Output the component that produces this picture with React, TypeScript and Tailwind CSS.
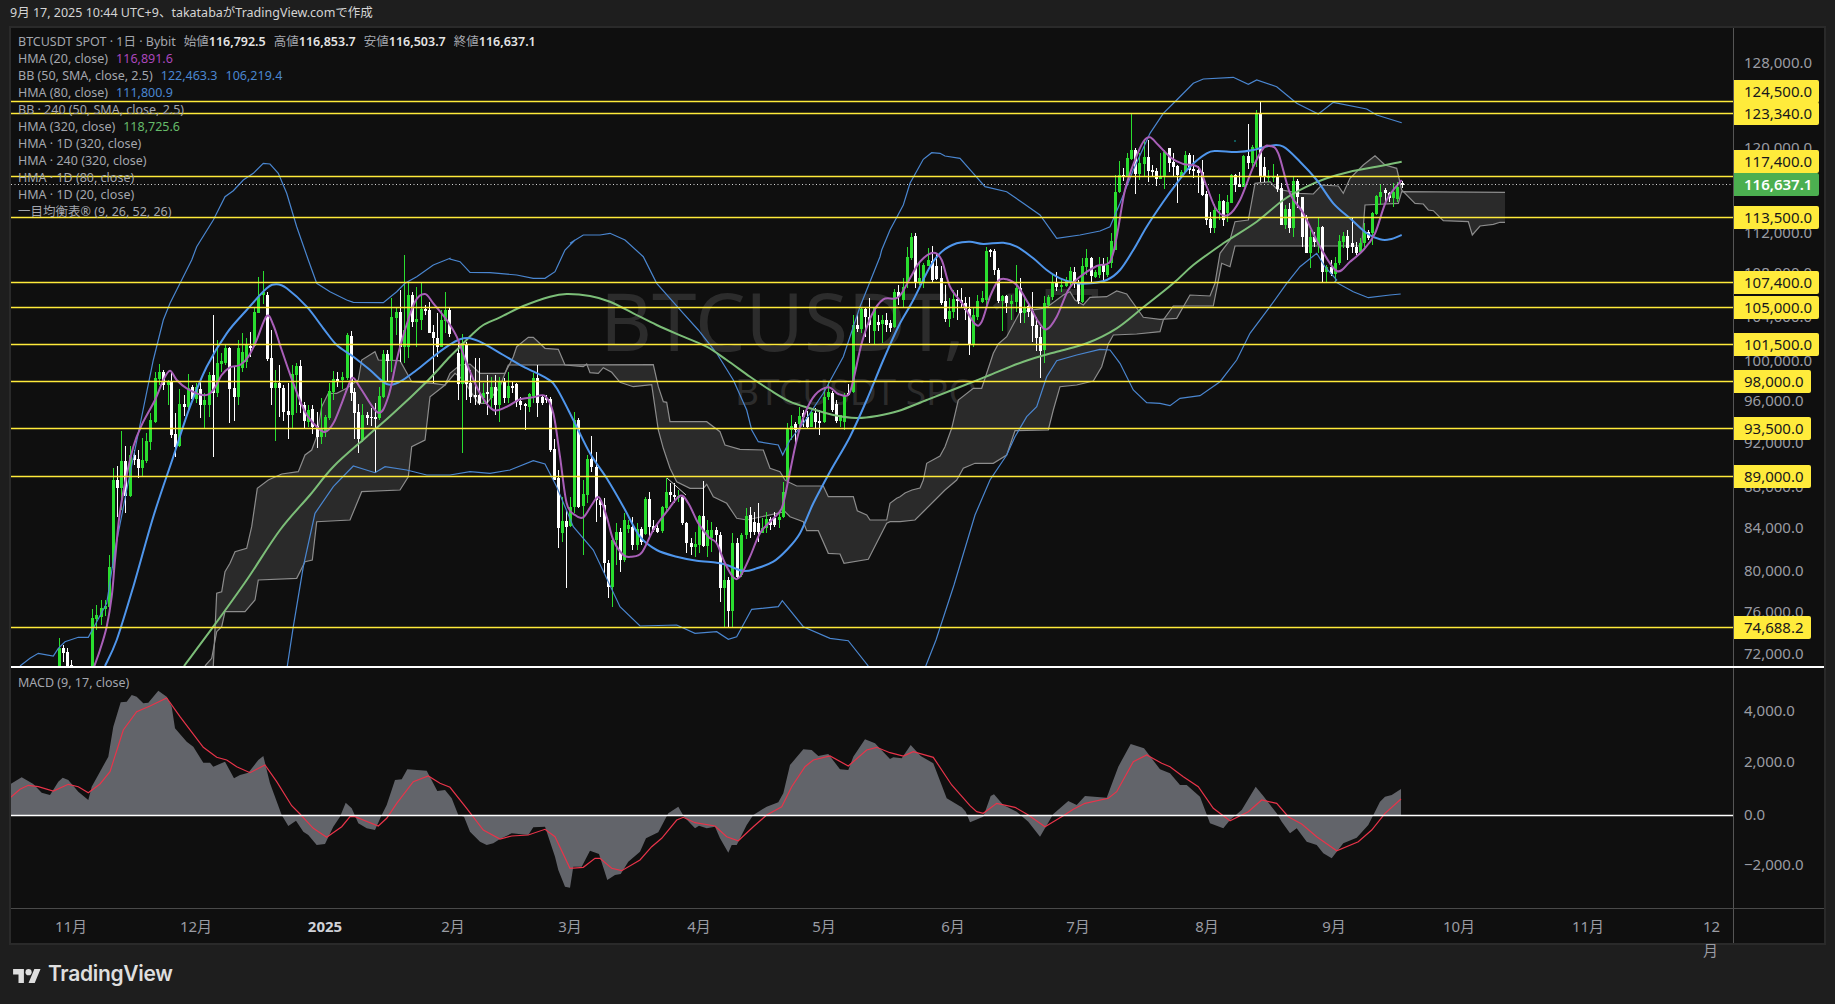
const sans = "font-['Noto_Sans','Noto_Sans_CJK_JP',sans-serif]";

// coordinates below were read off 3x crops, so each block keeps its crop origin
type Pt = [number, number];

function at(ox: number, oy: number, raw: string): Pt[] {
  return raw
    .trim()
    .split(/\s+/)
    .map((p) => {
      const [x, y] = p.split(",").map(Number);
      return [ox + x / 3, oy + y / 3] as Pt;
    });
}

const poly = (pts: Pt[]) => pts.map(([x, y]) => `${x.toFixed(1)},${y.toFixed(1)}`).join(" ");

function smooth(pts: Pt[]) {
  let d = `M${pts[0][0].toFixed(1)} ${pts[0][1].toFixed(1)}`;
  for (let i = 0; i < pts.length - 1; i++) {
    const p0 = pts[Math.max(i - 1, 0)];
    const p1 = pts[i];
    const p2 = pts[i + 1];
    const p3 = pts[Math.min(i + 2, pts.length - 1)];
    const c1 = [p1[0] + (p2[0] - p0[0]) / 6, p1[1] + (p2[1] - p0[1]) / 6];
    const c2 = [p2[0] - (p3[0] - p1[0]) / 6, p2[1] - (p3[1] - p1[1]) / 6];
    d += `C${c1[0].toFixed(1)} ${c1[1].toFixed(1)} ${c2[0].toFixed(1)} ${c2[1].toFixed(1)} ${p2[0].toFixed(1)} ${p2[1].toFixed(1)}`;
  }
  return d;
}

const hma20 = [
  ...at(0, 250, "283,1248 300,1200 320,1130 335,1040 345,930 358,800 375,700 400,590 425,525 465,450 490,390 510,362 530,390 560,415 612,436 640,420 665,375 690,352 720,345 745,320 770,270 800,198 820,225 845,300 880,400 915,485 950,530 975,546 1000,520 1025,460 1050,395 1062,385 1085,420 1135,488 1165,440 1190,330 1215,240 1245,155 1275,132 1300,160 1340,210"),
  ...at(450, 240, "20,290 50,370 90,460 130,510 170,500 210,478 250,472 285,468 310,520 330,650 350,790 375,825 400,832 425,795 447,772 470,830 490,900 520,945 545,950 575,938 610,870 650,815 690,767 715,790 745,850 775,890 800,910 825,970 850,1012 870,1010 900,950 930,880 965,840 995,805 1015,720 1040,600 1065,520 1095,465 1135,442 1165,462 1195,465 1210,420 1235,310 1265,225 1300,178 1345,172"),
  ...at(900, 220, "30,175 60,125 100,98 125,120 150,200 190,255 225,312 245,305 270,230 295,182 320,178 350,195 385,250 415,305 440,328 470,290 505,210 540,170 590,138"),
  ...at(1100, 90, "30,515 50,440 75,300 105,210 130,155 150,142 175,165 215,205 250,222 295,232 320,290 350,360 385,375 420,330 460,230 490,175 510,168 535,190 570,310 610,370 660,470 710,543 750,515 790,480 825,430 860,330 905,270"),
];

const hma80 = [
  ...at(0, 250, "315,1248 350,1170 400,1010 460,800 520,620 570,470 620,350 680,250 740,180 800,115 830,103 860,115 920,170 970,235 1010,285 1060,320 1110,360 1160,402 1200,395 1250,360 1300,320 1345,287"),
  ...at(450, 240, "30,298 60,295 100,310 160,345 220,380 290,415 320,445 370,540 420,640 470,715 520,800 570,890 620,930 680,950 740,962 800,968 830,975 880,993 920,985 970,965 1010,930 1050,880 1090,790 1140,695 1200,590 1250,480 1300,360 1345,260"),
  ...at(900, 220, "40,240 90,140 125,95 170,70 210,65 250,72 310,68 350,80 400,115 440,150 480,175 530,190 570,190 620,180 660,150"),
  ...at(840, 70, "880,540 920,470 970,395 1010,340 1050,290"),
  ...at(1100, 90, "320,190 350,183 410,186 460,180 510,167 550,170 600,215 650,270 700,340 750,385 800,430 840,448 870,448 905,435"),
];

const hma320 = [
  ...at(0, 250, "552,1248 640,1130 740,990 840,840 930,735 1000,650 1100,560 1180,490 1280,395 1345,325"),
  ...at(450, 240, "30,320 70,280 100,255 150,232 220,198 300,170 350,162 420,168 480,185 550,220 620,255 700,290 770,320 830,360 900,410 960,450 1020,485 1080,505 1150,525 1220,534 1280,528 1345,513"),
  ...at(900, 220, "80,540 170,505 270,465 370,425 470,395 560,370 650,325 730,262 820,190"),
  ...at(1100, 90, "280,525 370,460 470,395 550,330 620,290 680,265 750,245 820,232 905,215"),
];

const bbUpper = [
  ...at(0, 250, "60,1248 90,1225 115,1210 160,1218 175,1195 195,1175 235,1162 265,1162 285,1125 320,1060 345,900 380,720 420,525 460,330 490,210 510,160 550,80 575,30"),
  ...at(100, 130, "275,390 290,350 340,270 375,200 400,182 430,150 460,130 490,100 510,102 535,130 560,190 590,290 625,390"),
  ...at(0, 250, "950,100 990,125 1040,150 1060,157 1150,158 1190,125 1215,100 1250,80 1300,45 1350,25"),
  ...at(450, 240, "0,57 30,65 60,97 120,98 200,105 250,115 285,115 315,95 345,30 375,0"),
  ...at(100, 130, "1410,340 1450,315 1500,315"),
  ...at(450, 240, "480,-20 525,0 580,50 620,130 700,220 745,270 800,340 850,420 890,510 905,570 925,605 985,615 998,645 1020,600 1060,550 1120,460 1180,350 1230,200 1290,50"),
  ...at(840, 70, "125,540 150,480 190,405 210,340 250,268 275,248 300,250 315,258 360,265 400,310 435,350 500,365 550,400 600,435 650,505 720,495 780,483 810,470 840,400 880,300 930,190 970,130 1010,90 1060,40 1090,27 1180,22 1225,43 1250,30 1310,50 1340,75"),
  ...at(1100, 90, "590,40 655,72 700,37 800,57 830,75 905,98"),
];

const bbLower = [
  ...at(0, 250, "862,1248 880,1130 910,950 945,790 1000,710 1060,648 1125,668 1155,650 1220,660 1280,675 1345,675"),
  ...at(450, 240, "0,705 60,695 120,700 180,690 250,662 285,672 320,740 370,860 430,930 510,1100 570,1158 680,1155 735,1180 800,1175 835,1198 860,1190 905,1108 985,1100 997,1082 1060,1160 1140,1195 1195,1202 1255,1278"),
];

const bbLower2 = [
  [925, 668] as Pt,
  [936, 640] as Pt,
  [954, 585] as Pt,
  [975, 515] as Pt,
  ...at(900, 220, "270,780 320,705 345,650 380,590 410,560 440,470 470,422 530,405 600,388 630,390 660,430 700,510 740,548 780,550 810,557 840,535 900,527 960,485 1010,420 1050,340 1110,260 1160,190 1200,140 1250,100 1275,140 1310,180"),
  ...at(1100, 90, "705,575 760,605 805,623 870,615 902,612"),
];

const spanA = [
  ...at(0, 250, "640,1248 650,1030 665,1025 675,965 690,940 705,905 740,895 755,830 772,715 805,690 845,672 895,665 915,615 935,600 950,560 965,470 985,430 1010,430 1040,415 1075,390 1085,330 1125,305 1135,330 1200,332 1235,395 1300,400 1335,405"),
  ...at(450, 240, "15,400 40,420 85,490 110,490 150,440 165,400 190,350 200,320 235,292 250,292 285,325 325,328 345,375 400,380 410,372 420,398 445,400 460,383 485,397 510,427 550,440 605,434 625,570 640,625 660,685 680,725 720,745 760,745 770,733 790,770 830,790 860,835 890,840 1005,815 1020,830 1060,845 1070,872 1105,872 1135,940 1170,942 1182,970 1255,958 1310,850 1320,845 1350,845"),
  [915, 520] as Pt,
  [925, 510] as Pt,
  [935, 500] as Pt,
  [945, 490] as Pt,
  ...at(900, 220, "170,780 190,745 225,730 280,730 320,705 345,632 445,630 460,570 480,500 530,495 580,483 605,440 625,372 640,345 710,342 780,335 790,300 820,258 940,258 965,130 990,140 1005,78"),
  ...at(1100, 90, "785,468 795,345 895,340 905,305 1215,307"),
];

const spanB = [
  ...at(0, 250, "615,1248 635,1225 650,1145 665,1130 675,1085 735,1085 765,1050 775,990 890,985 915,935 937,930 950,815 1050,810 1085,725 1200,720 1225,680 1235,590 1275,570 1290,440 1335,405 1350,370"),
  ...at(450, 240, "30,375 60,372 90,400 165,400 175,375 610,374 625,440 640,485 650,487 660,545 770,545 810,575 825,615 870,628 940,630 960,685 990,695 1005,720 1020,728 1040,738 1120,738 1135,770 1210,770 1222,812 1250,825 1260,840 1310,840 1320,790 1340,775 1350,770"),
  [905, 493] as Pt,
  [912, 490] as Pt,
  [920, 488] as Pt,
  ...at(900, 220, "70,780 80,730 120,708 135,680 155,625 175,540 220,505 245,505 280,400 295,372 320,350 360,275 430,265 450,255 490,225 510,215 525,240 550,255 570,232 620,230 650,213 680,222 730,292 780,298 830,295 850,260 870,225 930,228 945,190 960,100 990,60 1005,5"),
  ...at(1100, 90, "445,390 465,280 510,275 530,297 600,310 640,312 665,285 715,288 730,310 750,265 790,225 825,197 855,225 890,235 905,300 945,340 970,342 985,360 1000,362 1030,392 1105,395 1117,435 1140,408 1180,403 1200,397 1215,397"),
];

const cloud = [...spanA, ...[...spanB].reverse()];

// x, colour, body top, body bottom, wick top, wick bottom
const candleBlocks: [number, number, string][] = [
  [0, 250, `178 g 1195 1248 1165 1248,190 w 1195 1210 1185 1235,202 w 1207 1248 1195 1248,214 w 1245 1248 1230 1248,277 g 1105 1248 1078 1248,289 g 1095 1107 1065 1140,304 g 1075 1100 1050 1125,316 g 1068 1076 1050 1098,328 g 950 1070 915 1080,340 g 690 955 655 960,352 w 690 715 648 800,364 g 633 715 543 780,376 w 633 738 588 790,391 g 615 737 587 740,403 w 615 630 600 645,415 w 628 655 600 685,427 g 630 655 565 680,439 g 573 633 550 640,451 g 510 575 490 600,466 g 385 515 365 520,478 g 365 388 342 405,490 w 365 405 360 420,503 g 395 405 390 465,514 w 392 555 370 565,526 w 552 590 490 620,538 g 462 588 417 590,553 w 462 472 435 498,565 g 415 470 373 480,577 w 411 447 405 455,589 g 412 448 400 460,601 w 418 465 387 505,613 g 450 465 430 535,628 g 375 465 365 500,640 w 375 430 195 620,652 g 340 430 270 440,664 g 333 342 310 365,676 g 293 338 285 345,688 w 293 417 290 518,703 w 413 440 350 512,715 g 293 440 270 465,727 g 305 355 250 365,739 g 285 335 265 353,751 w 288 290 245 320,763 g 185 288 170 290,775 g 140 190 82 190,790 g 125 135 63 162,802 w 135 328 125 332,814 w 323 413 240 465,826 g 400 415 360 572,838 w 398 415 345 500,850 w 413 485 405 512,865 w 483 495 400 567,877 g 373 495 345 535,889 g 348 375 340 490,901 w 348 465 330 490,913 w 465 513 455 535,925 g 480 515 465 532,937 w 477 530 465 552,952 w 528 560 485 595,964 g 538 560 445 582,976 g 500 545 495 560,988 g 423 503 400 510,1000 g 388 425 362 450,1012 w 388 390 365 410,1026 g 380 390 365 418,1040 g 255 385 250 390,1052 w 258 430 243 452,1063 w 425 488 415 568,1075 w 487 567 462 608,1087 g 495 570 462 575,1102 w 495 505 487 525,1114 w 500 503 475 527,1126 w 502 504 460 670,1138 g 438 505 412 510,1150 g 312 440 300 445,1162 w 312 333 300 395,1174 g 202 330 143 365,1189 g 185 205 170 255,1201 w 185 290 120 335,1213 g 240 290 15 340,1225 g 135 290 100 325,1237 w 135 215 125 230,1249 g 207 215 110 290,1264 g 178 210 100 240,1276 w 178 180 165 195,1288 w 180 248 155 250,1300 w 245 265 225 400,1312 w 265 290 190 320,1324 g 210 290 180 290,1336 g 180 212 125 250,1348 w 180 252 170 260`],
  [450, 240, `25 w 340 433 300 480,37 g 310 433 282 638,49 w 315 432 305 480,61 w 430 470 390 490,74 w 465 470 355 495,88 w 465 490 355 495,100 g 460 475 430 490,112 w 455 462 405 525,124 g 440 475 410 510,136 w 440 495 405 525,148 g 422 495 410 545,162 w 425 475 415 490,175 g 438 475 395 490,187 w 438 445 425 460,199 w 433 485 430 500,211 w 483 495 470 510,224 w 493 497 490 570,238 g 463 500 458 515,250 g 413 467 400 490,262 w 413 490 375 530,275 w 472 490 465 495,287 w 475 480 465 490,299 w 478 630 472 635,313 w 627 720 597 720,325 w 715 865 690 925,337 g 843 878 770 905,349 w 842 860 810 1045,361 g 800 858 770 860,373 g 540 800 517 820,385 w 540 800 535 805,400 g 762 797 720 945,412 g 656 765 645 790,424 w 657 680 587 695,437 w 680 780 635 845,449 w 780 795 775 830,461 w 795 970 775 1000,475 w 970 1040 960 1073,487 g 900 1040 890 1100,499 g 875 900 850 975,511 w 875 960 865 995,523 g 840 960 820 965,535 g 855 868 840 880,547 w 860 915 830 930,562 g 868 915 850 930,574 w 868 905 860 915,586 g 778 882 770 885,598 w 778 860 755 895,610 w 857 870 840 875,622 w 865 875 855 880,636 g 800 872 797 878,648 g 757 803 715 815,661 w 757 765 730 785,673 w 765 772 730 790,685 g 767 775 750 785,697 w 770 850 765 855,709 w 850 910 845 940,724 w 908 920 895 945,736 g 912 920 875 950,748 g 828 915 825 940,760 w 828 918 722 920,772 g 870 918 840 950,784 g 870 895 845 935,798 w 870 885 860 910,810 w 885 1045 875 1085,822 g 1020 1045 968 1165,835 w 1020 1112 1010 1165,847 g 908 1112 880 1160,860 w 908 1012 895 1015,874 g 885 1005 880 1010,887 g 828 885 805 898,899 w 825 875 800 895,911 w 845 875 815 885,923 w 848 875 790 905,935 g 865 878 835 880,947 g 838 865 815 880,960 w 838 855 830 870,973 w 835 855 815 860,986 g 832 840 815 865,998 g 755 830 725 835,1010 g 565 720 548 730,1022 g 558 570 525 600,1035 w 552 570 545 620,1048 g 528 552 500 575,1060 w 520 530 510 560,1072 w 530 560 512 565,1084 g 515 560 510 560,1096 w 520 545 505 565,1108 w 542 548 510 585,1123 g 470 545 440 548,1135 g 455 470 425 480,1147 w 458 510 452 515,1159 w 492 542 480 548,1171 g 525 542 525 560,1183 g 465 545 460 570,1195 w 460 466 433 468,1209 g 255 455 225 460,1221 w 255 267 222 275,1233 g 207 268 200 280,1246 w 207 232 205 290,1258 w 230 255 175 310,1273 g 205 272 200 312,1285 w 245 256 225 272,1297 g 240 252 225 310,1309 w 240 255 220 275,1321 w 250 265 240 275,1333 g 155 262 148 264,1345 w 157 172 135 195`],
  [900, 220, `10 g 200 240 175 262,22 g 112 190 82 205,34 g 50 115 40 120,46 w 48 190 40 205,58 g 175 190 125 195,70 g 135 190 128 205,85 g 120 138 85 135,97 w 122 180 78 185,109 w 137 178 100 180,122 w 175 248 138 255,134 w 243 298 195 305,146 g 272 297 235 320,158 g 238 275 210 295,170 w 238 241 210 300,183 w 240 248 205 265,195 w 248 270 232 300,207 w 268 372 232 405,220 g 285 372 265 380,232 g 243 290 225 300,247 g 235 245 212 250,259 g 92 240 82 255,271 w 90 93 88 110,283 w 92 150 88 165,295 w 150 243 145 250,307 g 228 243 225 333,319 w 228 250 225 280,333 g 243 252 225 300,347 g 204 245 135 275,359 w 204 280 175 310,371 g 262 278 235 310,383 w 258 275 248 290,395 w 272 318 215 365,409 w 315 355 290 393,421 w 350 393 322 475,433 g 250 390 228 430,445 g 232 255 225 260,457 g 190 232 165 240,469 w 188 200 157 212,484 g 196 198 175 215,497 g 180 197 170 200,509 g 153 190 140 200,521 w 155 185 142 205,533 w 190 242 180 252,545 g 138 245 115 250,557 g 115 140 88 165,572 w 115 168 110 190,584 g 155 170 150 175,596 g 135 165 110 175,608 w 132 155 115 185,620 g 135 165 110 170,632 g 62 130 40 145`],
  [840, 70, `826 g 365 540 315 540,838 g 315 365 272 370,850 w 315 318 295 332,862 g 265 318 250 320,874 g 240 268 132 270,886 w 240 312 235 372,898 g 280 312 250 330,913 g 262 282 208 320,925 w 262 302 210 335,937 w 300 305 285 322,949 w 303 328 295 347,961 g 322 328 248 328,973 g 245 320 240 358,988 w 235 278 233 305,1000 w 277 290 250 320,1012 w 288 315 285 400,1024 g 305 320 300 320,1036 g 255 305 243 310,1048 w 255 300 248 312,1060 w 298 302 255 325,1074 w 300 310 288 370,1086 w 307 375 270 378,1098 w 372 450 363 465,1110 w 448 475 425 488,1123 g 420 475 402 490,1136 g 393 420 372 450,1150 w 392 450 390 468,1162 g 397 430 375 455,1174 g 315 400 312 400,1186 w 315 345 312 365,1198 w 342 350 305 352,1210 g 258 350 255 352,1225 w 258 280 162 298,1237 g 230 280 225 292,1249 g 130 235 120 290,1261 w 130 320 95 335,1273 w 292 320 262 335,1285 g 318 320 300 335,1298 g 318 320 283 335,1312 w 318 358 312 365,1324 w 355 465 340 465,1336 g 418 465 405 478,1348 w 418 475 400 490`],
  [1100, 90, `580 g 272 415 262 440,592 w 272 322 268 355,605 w 320 440 320 470,619 w 380 490 375 490,631 g 440 490 420 535,643 w 440 455 425 470,655 g 410 465 382 490,667 w 410 545 408 575,679 g 530 545 525 575,693 w 530 552 510 558,705 g 518 552 500 575,717 g 453 520 435 525,730 g 438 455 425 475,742 w 438 475 420 510,755 w 460 470 385 490,768 w 472 490 455 495,780 g 458 485 445 490,793 g 425 460 400 470,805 w 425 445 420 450,817 g 370 430 365 465,829 g 318 372 315 375,841 g 305 322 283 345,856 w 300 308 295 335,868 w 310 325 305 335,880 g 305 325 280 352,892 g 290 328 275 335,905 w 280 284 272 295`],
];

const candles = candleBlocks.flatMap(([ox, oy, raw]) =>
  raw.split(",").map((row) => {
    const [zx, c, t, b, h, l] = row.split(" ");
    return {
      x: Math.round(ox + Number(zx) / 3),
      green: c === "g",
      top: oy + Number(t) / 3,
      bottom: oy + Number(b) / 3,
      high: oy + Number(h) / 3,
      low: oy + Number(l) / 3,
    };
  }),
);

const macdOutline = [
  ...at(0, 640, "32,432 65,412 100,432 125,458 150,465 175,425 188,413 205,420 235,455 265,480 275,440 300,395 325,350 340,260 362,187 380,185 395,165 410,170 430,190 445,188 475,152 500,170 515,200 525,265 560,305 580,320 610,368 630,368 640,380 675,365 702,415 720,405 745,398 775,360 790,348 810,430 845,525 865,558 888,542 910,575 925,585 950,615 975,612 1000,560 1020,530 1037,488 1055,505 1075,550 1100,565 1125,570 1145,525 1160,495 1185,420 1205,418 1222,388 1280,392 1312,453 1335,450 1355,475 1375,525 1392,530 1410,575 1440,605 1460,615 1480,610"),
  ...at(500, 670, "0,507 35,490 85,495 100,472 135,470 165,560 175,600 195,650 210,653 220,590 245,590 270,542 297,552 322,630 345,615 362,612 385,575 420,545 438,505 475,487 505,430 535,410 552,440 585,475 597,467 620,475 645,470 660,505 685,548 695,525 710,525 740,465 760,435 800,410 835,397 850,370 870,285 910,238 935,240 955,258 985,252 1020,298 1045,300 1060,260 1095,208 1125,220 1170,267 1180,262 1205,265 1232,225 1262,258 1300,280 1340,385 1385,412 1397,425"),
  ...at(970, 670, "0,457 40,440 62,378 72,373 100,405 140,425 175,455 210,500 250,432 295,393 320,405 345,378 410,383 445,290 482,222 522,235 570,298 600,310 630,345 650,345 690,380 720,460 760,475 780,450 815,420 857,350 880,378 920,430 935,455 960,490 980,475 1010,515 1040,525 1060,550 1085,565 1120,520 1160,503 1195,465 1230,395 1245,380 1265,375 1293,357 1293,435"),
];
const macdArea: Pt[] = [[11, 815], ...macdOutline, [1401, 815]];

const macdSignal = [
  ...at(0, 640, "32,472 60,448 85,436 115,440 160,453 205,433 235,440 265,458 300,432 330,395 370,270 410,215 450,198 500,174 540,230 610,322 650,352 680,360 710,380 750,398 795,375 830,425 875,497 900,522 940,565 980,592 1025,560 1050,530 1065,530 1135,558 1160,535 1190,490 1240,425 1285,408 1320,430 1350,442 1400,505 1450,570"),
  ...at(500, 670, "0,507 35,498 85,495 135,478 165,500 210,595 250,592 285,565 300,565 335,595 365,602 420,570 455,530 485,505 530,450 550,442 585,458 645,468 680,500 715,512 760,470 800,435 845,410 875,350 915,290 940,270 990,258 1045,288 1100,240 1130,232 1170,248 1210,258 1240,245 1300,262 1355,345"),
  ...at(970, 670, "0,407 20,425 40,430 80,400 135,412 175,435 225,470 280,437 310,418 345,400 415,385 440,365 490,275 530,255 575,280 600,290 640,320 685,350 730,415 780,452 835,425 875,390 920,400 955,440 995,462 1040,500 1100,542 1165,515 1205,480 1245,430 1293,387"),
];

const levels = [101, 113, 176, 217, 282, 307, 344, 381, 428, 476, 627];

const ticks = [
  { y: 62, label: "128,000.0" },
  { y: 147, label: "120,000.0" },
  { y: 232, label: "112,000.0" },
  { y: 272, label: "108,000.0" },
  { y: 316, label: "104,000.0" },
  { y: 360, label: "100,000.0" },
  { y: 400, label: "96,000.0" },
  { y: 442, label: "92,000.0" },
  { y: 486, label: "88,000.0" },
  { y: 527, label: "84,000.0" },
  { y: 570, label: "80,000.0" },
  { y: 611, label: "76,000.0" },
  { y: 653, label: "72,000.0" },
];

const badges = [
  { top: 80, label: "124,500.0" },
  { top: 102, label: "123,340.0" },
  { top: 150, label: "117,400.0" },
  { top: 206, label: "113,500.0" },
  { top: 271, label: "107,400.0" },
  { top: 296, label: "105,000.0" },
  { top: 333, label: "101,500.0" },
  { top: 370, label: "98,000.0" },
  { top: 417, label: "93,500.0" },
  { top: 465, label: "89,000.0" },
  { top: 616, label: "74,688.2" },
];

const macdTicks = [
  { y: 710, label: "4,000.0" },
  { y: 761, label: "2,000.0" },
  { y: 814, label: "0.0" },
  { y: 864, label: "−2,000.0" },
];

const months = [
  { x: 71, label: "11月" },
  { x: 196, label: "12月" },
  { x: 325, label: "2025", strong: true },
  { x: 453, label: "2月" },
  { x: 570, label: "3月" },
  { x: 699, label: "4月" },
  { x: 824, label: "5月" },
  { x: 953, label: "6月" },
  { x: 1078, label: "7月" },
  { x: 1207, label: "8月" },
  { x: 1334, label: "9月" },
  { x: 1459, label: "10月" },
  { x: 1588, label: "11月" },
  { x: 1713, label: "12月" },
];

function Legend() {
  return (
    <div className="absolute left-[7px] top-[5px] flex flex-col text-[12.5px] leading-[17px] text-[#a3a6ad]">
      <div className="flex gap-[8px]">
        <span>BTCUSDT SPOT · 1日 · Bybit</span>
        <span>始値<b className="font-semibold text-[#e4e4e4]">116,792.5</b></span>
        <span>高値<b className="font-semibold text-[#e4e4e4]">116,853.7</b></span>
        <span>安値<b className="font-semibold text-[#e4e4e4]">116,503.7</b></span>
        <span>終値<b className="font-semibold text-[#e4e4e4]">116,637.1</b></span>
      </div>
      <div className="flex gap-[8px]"><span>HMA (20, close)</span><span className="text-[#ab47bc]">116,891.6</span></div>
      <div className="flex gap-[8px]">
        <span>BB (50, SMA, close, 2.5)</span>
        <span className="text-[#4a86d0]">122,463.3</span>
        <span className="text-[#4a86d0]">106,219.4</span>
      </div>
      <div className="flex gap-[8px]"><span>HMA (80, close)</span><span className="text-[#4a86d0]">111,800.9</span></div>
      <div>BB · 240 (50, SMA, close, 2.5)</div>
      <div className="flex gap-[8px]"><span>HMA (320, close)</span><span className="text-[#66bb6a]">118,725.6</span></div>
      <div>HMA · 1D (320, close)</div>
      <div>HMA · 240 (320, close)</div>
      <div>HMA · 1D (80, close)</div>
      <div>HMA · 1D (20, close)</div>
      <div>一目均衡表® (9, 26, 52, 26)</div>
    </div>
  );
}

function PriceChart() {
  return (
    <svg viewBox="11 28 1722 638" className="relative block h-[638px] w-[1722px]">
      <polygon points={poly(cloud)} fill="#2a2a2a" fillRule="evenodd" />
      <polyline points={poly(spanA)} fill="none" stroke="#8c8c8c" strokeWidth="1.2" />
      <polyline points={poly(spanB)} fill="none" stroke="#8c8c8c" strokeWidth="1.2" />
      {candles.map((c, i) => (
        <g key={i} fill={c.green ? "#2ade2f" : "#ffffff"} shapeRendering="crispEdges">
          <rect x={c.x} y={c.high} width="1" height={Math.max(c.low - c.high, 1)} />
          <rect x={c.x - 1} y={c.top} width="3" height={Math.max(c.bottom - c.top, 1.5)} />
        </g>
      ))}
      <line x1="667" y1="478" x2="686" y2="495" stroke="#d0d0d0" strokeWidth="1" />
      <rect x="1234" y="140" width="2" height="2" fill="#0f5a5a" />
      <polyline points={poly(bbUpper)} fill="none" stroke="#4a86d0" strokeWidth="1.2" />
      <polyline points={poly(bbLower)} fill="none" stroke="#4a86d0" strokeWidth="1.2" />
      <polyline points={poly(bbLower2)} fill="none" stroke="#4a86d0" strokeWidth="1.2" />
      <path d={smooth(hma320)} fill="none" stroke="#7cbe78" strokeWidth="2" />
      <path d={smooth(hma80)} fill="none" stroke="#4f96ec" strokeWidth="2" />
      <path d={smooth(hma20)} fill="none" stroke="#a95fb8" strokeWidth="2" />
      {levels.map((y) => (
        <line key={y} x1="11" x2="1733" y1={y + 0.5} y2={y + 0.5} stroke="#ffeb3b" strokeWidth="1.3" />
      ))}
      <line x1="11" x2="1733" y1="184.5" y2="184.5" stroke="#d8d8d8" strokeWidth="1" strokeDasharray="1 2.5" />
    </svg>
  );
}

function MacdChart() {
  return (
    <svg viewBox="11 668 1722 240" className="block h-[240px] w-[1722px]">
      <polygon points={poly(macdArea)} fill="#62646a" />
      <polyline points={poly(macdSignal)} fill="none" stroke="#e8344a" strokeWidth="1.2" />
      <line x1="11" x2="1733" y1="815.5" y2="815.5" stroke="#ffffff" strokeWidth="1.5" />
    </svg>
  );
}

function AxisLabel({ y, label, base }: { y: number; label: string; base: number }) {
  return (
    <div
      className="absolute left-[10px] h-[20px] -translate-y-1/2 whitespace-nowrap leading-[20px] text-[#9a9ca3]"
      style={{ top: y - base }}
    >
      {label}
    </div>
  );
}

export default function App() {
  return (
    <div className={`flex h-[1004px] w-[1835px] flex-col overflow-hidden bg-[#1e1e1e] ${sans}`}>
      <div className="flex h-[26px] items-center pl-[10px] text-[12.5px] text-[#d4d4d4]">
        9月 17, 2025 10:44 UTC+9、takatabaがTradingView.comで作成
      </div>

      <div className="ml-[9px] flex w-[1817px] flex-col border-2 border-[#2a2a2a] bg-[#0f0f0f] text-[15px]">
        <div className="flex h-[638px]">
          <div className="relative w-[1722px]">
            <div className="absolute left-[589px] top-[242px] whitespace-nowrap text-[80px] leading-[100px] text-[#2c2c2c]">
              BTCUSDT, 1日
            </div>
            <div className="absolute left-[724px] top-[340px] whitespace-nowrap text-[37px] leading-[46px] text-[#2c2c2c]">
              BTCUSDT SPOT
            </div>
            <PriceChart />
            <Legend />
          </div>
          <div className="relative flex-1 border-l border-[#555555]">
            {ticks.map((t) => (
              <AxisLabel key={t.label} y={t.y} label={t.label} base={28} />
            ))}
            {badges.map((b) => (
              <div
                key={b.label}
                className="absolute left-0 flex h-[23px] items-center rounded-r-[2px] bg-[#ffeb3b] pl-[10px] pr-[7px] text-[#17171c]"
                style={{ top: b.top - 28 }}
              >
                {b.label}
              </div>
            ))}
            <div className="absolute left-0 top-[145px] flex h-[23px] items-center rounded-r-[2px] bg-[#4caf50] pl-[10px] pr-[7px] font-semibold text-white">
              116,637.1
            </div>
          </div>
        </div>

        <div className="h-[2px] bg-white" />

        <div className="flex h-[240px]">
          <div className="relative w-[1722px]">
            <MacdChart />
            <div className="absolute left-[7px] top-[6px] text-[12.5px] leading-[17px] text-[#a3a6ad]">MACD (9, 17, close)</div>
          </div>
          <div className="relative flex-1 border-l border-[#555555]">
            {macdTicks.map((t) => (
              <AxisLabel key={t.label} y={t.y} label={t.label} base={668} />
            ))}
          </div>
        </div>

        <div className="flex h-[35px] border-t border-[#4a4a4a]">
          <div className="relative w-[1722px]">
            {months.map((m) => (
              <span
                key={m.x}
                className={`absolute top-[5px] -translate-x-1/2 leading-[24px] ${m.strong ? "font-bold text-[#d0d2d8]" : "text-[#9a9ca3]"}`}
                style={{ left: m.x - 11 }}
              >
                {m.label}
              </span>
            ))}
          </div>
          <div className="flex-1 border-l border-[#555555]" />
        </div>
      </div>

      <div className="flex items-center gap-[6px] pl-[12px] pt-[17px]">
        <svg viewBox="0 0 36 22" className="h-[17px] w-[30px] fill-[#dedede]">
          <path d="M14 22H7V11H0V4h14v18zM28 22h-8l7.5-18h8L28 22z" />
          <circle cx="20" cy="8" r="4" />
        </svg>
        <span className="font-['Inter',sans-serif] text-[21px] font-semibold leading-[24px] tracking-[-0.3px] text-[#dedede]">
          TradingView
        </span>
      </div>
    </div>
  );
}
